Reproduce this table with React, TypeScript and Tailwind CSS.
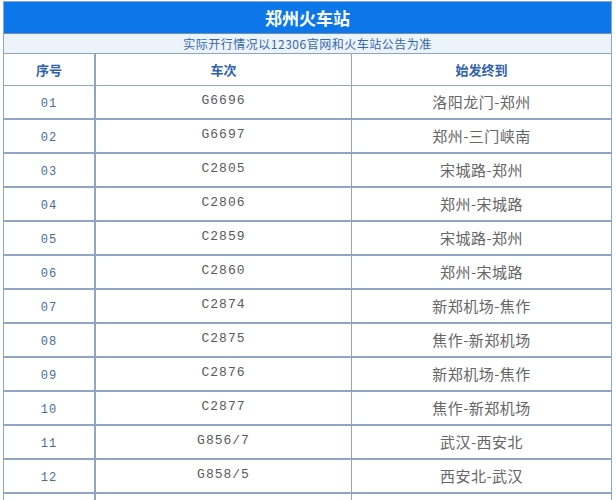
const rows = [
  { no: "01", train: "G6696", route: "洛阳龙门-郑州" },
  { no: "02", train: "G6697", route: "郑州-三门峡南" },
  { no: "03", train: "C2805", route: "宋城路-郑州" },
  { no: "04", train: "C2806", route: "郑州-宋城路" },
  { no: "05", train: "C2859", route: "宋城路-郑州" },
  { no: "06", train: "C2860", route: "郑州-宋城路" },
  { no: "07", train: "C2874", route: "新郑机场-焦作" },
  { no: "08", train: "C2875", route: "焦作-新郑机场" },
  { no: "09", train: "C2876", route: "新郑机场-焦作" },
  { no: "10", train: "C2877", route: "焦作-新郑机场" },
  { no: "11", train: "G856/7", route: "武汉-西安北" },
  { no: "12", train: "G858/5", route: "西安北-武汉" },
  { no: "", train: "", route: "" },
];

const cjk = "font-['Noto_Sans_CJK_SC','Noto_Sans',sans-serif]";
const mono = "font-['Liberation_Mono','DejaVu_Sans_Mono',monospace]";

export default function App() {
  return (
    <div className="bg-white w-[616px] h-[500px] overflow-hidden pl-[3px] pt-[1px]">
      <div className="w-[609px] border-l border-r border-t border-[#8ea5c6]">
        {/* Title */}
        <div className={`h-[32px] bg-[#0d77ea] border-b border-[#6f8db5] flex items-center justify-center text-white text-[17px] font-bold ${cjk}`}>
          郑州火车站
        </div>
        {/* Notice */}
        <div className={`h-[20px] bg-[#edf3fb] border-b border-[#8ea5c6] flex items-center justify-center text-[12px] text-[#3468ae] tracking-[0.5px] ${cjk}`}>
          实际开行情况以12306官网和火车站公告为准
        </div>
        {/* Header */}
        <div className={`grid grid-cols-[92px_256px_1fr] h-[32px] border-b border-[#8ea5c6] text-[13px] font-bold text-[#2f62ad] ${cjk}`}>
          <div className="flex items-center justify-center border-r-2 border-[#8ea5c6]">序号</div>
          <div className="flex items-center justify-center border-r border-[#8ea5c6]">车次</div>
          <div className="flex items-center justify-center">始发终到</div>
        </div>
        {rows.map((r, i) => (
          <div key={i} className="grid grid-cols-[92px_256px_1fr] h-[34px] border-b-2 border-[#8ea5c6]">
            <div className={`flex items-center justify-center pt-[3px] border-r-2 border-[#8ea5c6] text-[12px] text-[#4a6b9c] tracking-[1px] ${mono}`}>
              {r.no}
            </div>
            <div className={`flex items-center justify-center pb-[2px] border-r border-[#8ea5c6] text-[13px] text-[#5a5a5a] tracking-[1px] ${mono}`}>
              {r.train}
            </div>
            <div className={`flex items-center justify-center text-[15px] text-[#666] tracking-[0.5px] ${cjk}`}>
              {r.route}
            </div>
          </div>
        ))}
      </div>
    </div>
  );
}
